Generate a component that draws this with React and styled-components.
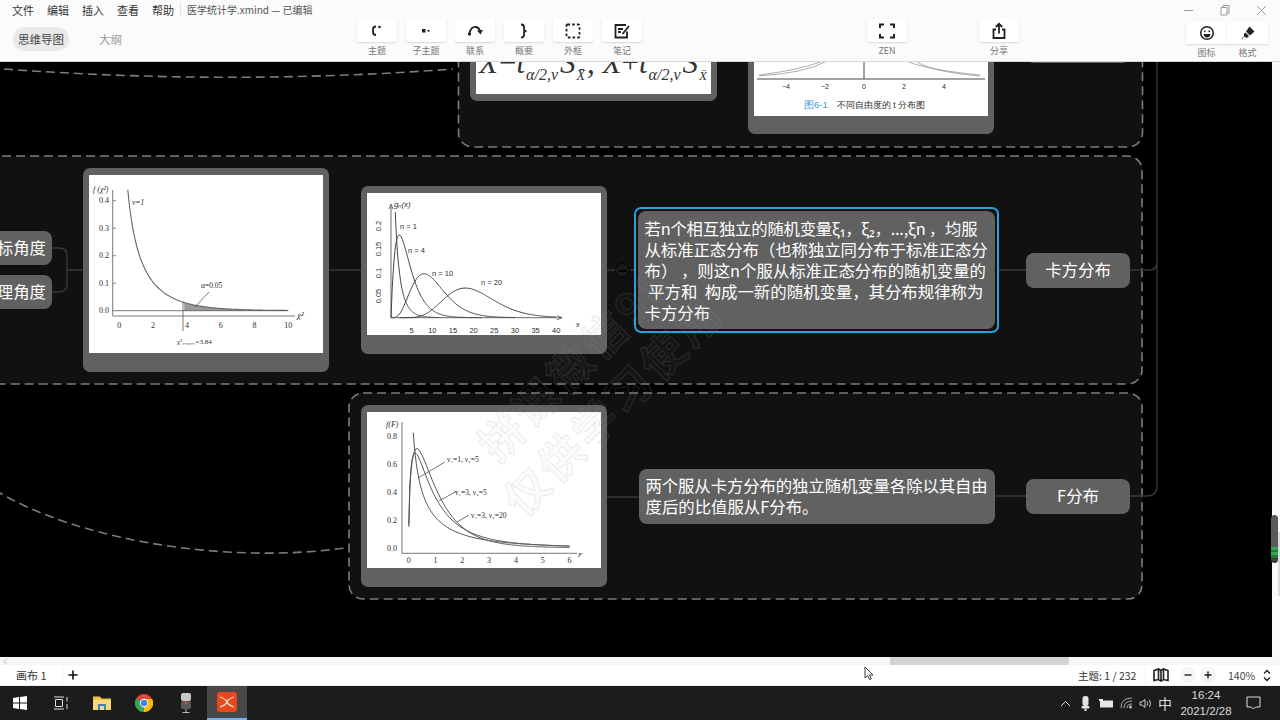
import React from "react";
import styled, { createGlobalStyle } from "styled-components";

const CJK = `"Noto Sans CJK SC", "Noto Sans", sans-serif`;

const GlobalStyle = createGlobalStyle`
  html, body {
    margin: 0;
    padding: 0;
    background: #000;
    overflow: hidden;
  }
  * {
    box-sizing: border-box;
  }
`;

const Screen = styled.div`
  width: 1280px;
  height: 720px;
  display: flex;
  flex-direction: column;
  font-family: ${CJK};
  overflow: hidden;
`;

/* window header */
const Header = styled.header`
  height: 62px;
  flex: none;
  background: #fbfbfb;
  border-bottom: 1px solid #d8d8d8;
`;

const MenuRow = styled.div`
  height: 19px;
  display: flex;
  align-items: center;
  padding: 0 12px;
  font-size: 11px;
  color: #333;
`;

const MenuItem = styled.span`
  width: 35px;
  flex: none;
`;

const DocTitle = styled.span`
  margin-left: -7px;
  padding-left: 6px;
  border-left: 1px solid #e2e2e2;
  font-size: 10px;
  line-height: 13px;
  color: #555;
`;

const WindowControls = styled.div`
  margin-left: auto;
  display: flex;
  gap: 24px;
  padding-right: 1px;
  color: #999;
`;

const ToolRow = styled.div`
  height: 42px;
  display: flex;
  align-items: flex-start;
`;

const Tabs = styled.div`
  width: 357px;
  flex: none;
  display: flex;
  align-items: center;
  padding: 8px 0 0 13px;
`;

const ActiveTab = styled.div`
  width: 56px;
  height: 24px;
  border-radius: 12px;
  background: #e9e9e9;
  color: #444;
  font-size: 11.5px;
  line-height: 24px;
  text-align: center;
`;

const Tab = styled.div`
  margin-left: 30px;
  color: #999;
  font-size: 11.5px;
`;

const ToolGroup = styled.div`
  display: flex;
  gap: ${(p) => p.$gap || 0}px;
  margin-left: ${(p) => p.$left || 0}px;
`;

const Tool = styled.div`
  width: ${(p) => p.$w || 40}px;
  display: flex;
  flex-direction: column;
  align-items: center;
`;

const ToolButton = styled.div`
  width: 100%;
  height: 23px;
  display: flex;
  align-items: center;
  justify-content: center;
  background: #fff;
  border-radius: 2px;
  box-shadow: 0 1px 2px rgba(0, 0, 0, 0.14);
  color: #222;
`;

const ToolLabel = styled.span`
  margin-top: 3px;
  font-size: 9px;
  line-height: 11px;
  color: #777;
`;

const FormatGroup = styled(ToolGroup)`
  margin-top: 3px;
  ${ToolButton} {
    height: 22px;
    border-radius: 0;
  }
`;

/* mind map */
const Body = styled.div`
  height: 595px;
  flex: none;
  display: flex;
`;

const Canvas = styled.main`
  position: relative;
  width: 1272px;
  height: 595px;
  background: #000;
  overflow: hidden;
`;

const Wires = styled.svg`
  position: absolute;
  inset: 0;
`;

const Topic = styled.div`
  position: absolute;
  left: ${(p) => p.$x}px;
  top: ${(p) => p.$y}px;
  width: ${(p) => p.$w}px;
  height: ${(p) => p.$h}px;
  display: flex;
  align-items: center;
  justify-content: ${(p) => p.$align || "center"};
  padding-right: ${(p) => p.$pad || 0}px;
  padding-bottom: 3px;
  border-radius: 8px;
  background: #616161;
  color: #fff;
  font-size: 16.4px;
  white-space: nowrap;
`;

const LongTopic = styled(Topic)`
  display: block;
  padding: ${(p) => p.$top}px 0 0 6.5px;
  font-size: 16.4px;
  line-height: 20.9px;
`;

const Selection = styled.div`
  position: absolute;
  left: 634px;
  top: 145px;
  width: 365px;
  height: 126px;
  border: 2px solid #2b9fe0;
  border-radius: 7px;
`;

const Line = styled.div`
  display: block;
  letter-spacing: ${(p) => p.$track || 0}px;
`;

const ImageCard = styled.div`
  position: absolute;
  left: ${(p) => p.$x}px;
  top: ${(p) => p.$y}px;
  width: ${(p) => p.$w}px;
  height: ${(p) => p.$h}px;
  padding: ${(p) => p.$inset}px 6px 0;
  border-radius: 7px;
  background: #616161;
`;

const Picture = styled.div`
  width: 100%;
  height: ${(p) => p.$h}px;
  background: #fff;
  overflow: hidden;
`;

const ChartSvg = styled.svg`
  display: block;
`;

const ChartText = styled.text`
  font-family: ${(p) => (p.$sans ? '"Liberation Sans", sans-serif' : '"Liberation Serif", serif')};
  font-size: ${(p) => p.$size || 8}px;
  font-style: ${(p) => (p.$italic ? "italic" : "normal")};
  fill: ${(p) => p.$fill || "#2c2c2c"};
`;

const Formula = styled.div`
  margin-top: 26px;
  display: flex;
  align-items: baseline;
  padding-left: 3px;
  height: 30px;
  font-family: "Liberation Serif", serif;
  font-size: 31px;
  line-height: 30px;
  color: #333;
  white-space: nowrap;
`;

const FormulaVar = styled.span`
  font-style: italic;
  margin-right: ${(p) => p.$gap || 0}px;
`;

const FormulaSub = styled.span`
  font-size: ${(p) => p.$size || 16}px;
  font-style: italic;
  margin-right: ${(p) => p.$gap || 0}px;
  position: relative;
  top: 7px;
`;

const Collapse = styled.div`
  position: absolute;
  left: 615px;
  top: 201px;
  width: 15px;
  height: 15px;
  display: flex;
  align-items: center;
  justify-content: center;
  border-radius: 50%;
  background: #1a1a1a;
  border: 1px solid #000;
  &::before {
    content: "";
    width: 8px;
    height: 2px;
    background: #000;
  }
`;

const Watermark = styled.div`
  position: absolute;
  left: ${(p) => p.$x}px;
  top: ${(p) => p.$y}px;
  transform: rotate(-45deg);
  transform-origin: left top;
  font-size: 44px;
  font-weight: 700;
  letter-spacing: 4px;
  white-space: nowrap;
  color: rgba(150, 150, 150, 0.05);
  -webkit-text-stroke: 1px rgba(150, 150, 150, 0.2);
  pointer-events: none;
`;

/* scrollbars */
const VScroll = styled.div`
  position: relative;
  width: 8px;
  height: 595px;
  background: #fafafa;
`;

const VTrack = styled.div`
  position: absolute;
  right: 0;
  top: 470px;
  width: 2px;
  height: 64px;
  background: #dcdcdc;
`;

const MiniMap = styled.div`
  position: absolute;
  left: -1px;
  top: 453px;
  width: 7px;
  height: 48px;
  border-radius: 4px;
  background: linear-gradient(#5a5a5a 0 66%, #2fa84f 66% 72%, #1f7a3a 72% 78%, #2fa84f 78% 84%, #1f7a3a 84% 90%, #3c3c3c 90%);
`;

const HScroll = styled.div`
  height: 8px;
  flex: none;
  display: flex;
  align-items: stretch;
  background: #f6f6f6;
`;

const HGap = styled.div`
  width: 890px;
  padding-left: 3px;
  display: flex;
  align-items: center;
  color: #bbb;
`;

const HThumb = styled.div`
  width: 179px;
  background: #d4d4d4;
`;

const StatusBar = styled.footer`
  height: 21px;
  flex: none;
  display: flex;
  align-items: center;
  padding-right: 2px;
  background: #fff;
  font-size: 11px;
  color: #333;
  border-bottom: 1px solid #f0f0f0;
`;

const SheetTab = styled.div`
  width: 63px;
  height: 100%;
  padding-left: 16px;
  display: flex;
  align-items: center;
  border-right: 1px solid #f2f2f2;
`;

const AddSheet = styled.div`
  width: 20px;
  display: flex;
  justify-content: center;
  color: #111;
`;

const Counter = styled.div`
  margin-left: auto;
  width: 68px;
  height: 100%;
  display: flex;
  align-items: center;
  border-right: 1px solid #f2f2f2;
  font-family: ${CJK};
  font-size: 10.5px;
`;

const StatusIcon = styled.div`
  width: ${(p) => p.$w}px;
  display: flex;
  justify-content: center;
  color: #222;
`;

const ZoomButton = styled.div`
  width: 16px;
  height: 16px;
  margin-right: 4px;
  display: flex;
  align-items: center;
  justify-content: center;
  border-radius: 50%;
  background: #f5f5f5;
  color: #222;
`;

const ZoomValue = styled.div`
  margin-left: 8px;
  width: 28px;
  font-size: 10.5px;
  color: #444;
`;

/* windows taskbar */
const Taskbar = styled.div`
  height: 34px;
  flex: none;
  display: flex;
  align-items: center;
  background: #1c1c1c;
  color: #e8e8e8;
`;

const TaskItem = styled.div`
  width: ${(p) => p.$w || 41}px;
  height: 100%;
  display: flex;
  align-items: center;
  justify-content: center;
  background: ${(p) => (p.$active ? "#484848" : "transparent")};
  border-bottom: ${(p) => (p.$active ? "2px solid #6fb1e8" : "none")};
`;

const Tray = styled.div`
  margin-left: auto;
  height: 100%;
  display: flex;
  align-items: center;
`;

const TrayItem = styled.div`
  width: ${(p) => p.$w || 20}px;
  display: flex;
  justify-content: center;
  font-size: ${(p) => p.$size || 12}px;
  color: #dcdcdc;
`;

const Clock = styled.div`
  width: 60px;
  margin-right: 8px;
  text-align: center;
  font-family: "Liberation Sans", sans-serif;
  font-size: 11.5px;
  line-height: 16px;
  color: #ddd;
`;

const Pointer = styled.svg`
  position: absolute;
  left: 864px;
  top: 666px;
`;

const plot = (fn, a, b, ox, oy, sx, sy, top = 0, n = 160) => {
  const pts = [];
  for (let i = 0; i <= n; i++) {
    const x = a + ((b - a) * i) / n;
    const py = oy - fn(x) * sy;
    if (py >= top) pts.push(`${(ox + x * sx).toFixed(1)} ${py.toFixed(1)}`);
  }
  return "M" + pts.join("L");
};

const chi = (k, gamma) => (x) =>
  (Math.pow(x, k / 2 - 1) * Math.exp(-x / 2)) / (Math.pow(2, k / 2) * gamma);

const fDist = (d1, d2, beta) => (x) =>
  Math.sqrt((Math.pow(d1 * x, d1) * Math.pow(d2, d2)) / Math.pow(d1 * x + d2, d1 + d2)) / (x * beta);

function ChiOneChart() {
  const ox = 30.3;
  const oy = 135.7;
  const sx = 16.9;
  const sy = 275;
  const pdf = chi(1, Math.sqrt(Math.PI));
  const tail = plot(pdf, 3.84, 9, ox, oy, sx, sy);
  return (
    <ChartSvg width="234" height="178">
      <path d={`${tail}L${ox + 9 * sx} ${oy}L${ox + 3.84 * sx} ${oy}Z`} fill="#9a9a9a" />
      <path d={plot(pdf, 0.5, 10, ox, oy, sx, sy)} fill="none" stroke="#666" strokeWidth="1.1" />
      <path d="M23.7 15V141H206M23.7 135.7H199M94 127V156M120 117L106 132" fill="none" stroke="#555" strokeWidth="0.8" />
      {[0.1, 0.2, 0.3, 0.4].map((v) => (
        <path key={v} d={`M24 ${oy - v * sy}h3`} stroke="#555" strokeWidth="0.7" />
      ))}
      {[0, 2, 4, 6, 8, 10].map((v) => (
        <ChartText key={v} x={ox + v * sx} y="153" textAnchor="middle">{v}</ChartText>
      ))}
      {["0.0", "0.1", "0.2", "0.3", "0.4"].map((v) => (
        <ChartText key={v} x="20" y={oy - Number(v) * sy + 2.5} textAnchor="end">{v}</ChartText>
      ))}
      <ChartText x="4" y="17" $italic>f (χ²)</ChartText>
      <ChartText x="43" y="30" $size={7.5} $italic>ν=1</ChartText>
      <ChartText x="112" y="113" $size={7.5}>α=0.05</ChartText>
      <ChartText x="208" y="143" $size={9} $italic>χ²</ChartText>
      <ChartText x="88" y="169" $size={7}>χ²₀.₀₅,₁=3.84</ChartText>
    </ChartSvg>
  );
}

function ChiFamilyChart() {
  const ox = 24;
  const oy = 124.7;
  const sx = 4.13;
  const sy = 450;
  const curves = [
    [chi(1, Math.sqrt(Math.PI)), 0.06, 12],
    [chi(4, 1), 0, 22],
    [chi(10, 24), 0, 30],
    [chi(20, 362880), 2, 40],
  ];
  return (
    <ChartSvg width="234" height="142">
      {curves.map(([fn, a, b], i) => (
        <path key={i} d={plot(fn, a, b, ox, oy, sx, sy, 19)} fill="none" stroke="#444" strokeWidth="1" />
      ))}
      <path d="M24 124.7V13M22 16L24 11L26 16M24 124.7H195M190 122.7L195 124.7L190 126.7" fill="none" stroke="#444" strokeWidth="0.8" />
      {[5, 10, 15, 20, 25, 30, 35, 40].map((v) => (
        <ChartText key={v} x={ox + v * sx} y="140" textAnchor="middle" $sans $size={7.5}>{v}</ChartText>
      ))}
      {[["0.2", 33], ["0.15", 56], ["0.1", 80], ["0.05", 103]].map(([t, y]) => (
        <ChartText key={t} x="14" y={y} textAnchor="middle" $sans $size={7.5} transform={`rotate(-90 14 ${y})`}>{t}</ChartText>
      ))}
      <ChartText x="27" y="14" $sans $size={8} $italic>gₙ(x)</ChartText>
      <ChartText x="33" y="36" $sans $size={7.5}>n = 1</ChartText>
      <ChartText x="41" y="60" $sans $size={7.5}>n = 4</ChartText>
      <ChartText x="65" y="83" $sans $size={7.5}>n = 10</ChartText>
      <ChartText x="114" y="92" $sans $size={7.5}>n = 20</ChartText>
      <ChartText x="209" y="134" $sans $size={7} $italic>x</ChartText>
    </ChartSvg>
  );
}

function FChart() {
  const ox = 41.7;
  const oy = 136;
  const sx = 26.8;
  const sy = 140;
  const curves = [
    [fDist(1, 5, 1.178), 0.062],
    [fDist(3, 5, 0.196), 0.005],
    [fDist(3, 20, 0.02702), 0.005],
  ];
  return (
    <ChartSvg width="234" height="156">
      {curves.map(([fn, a], i) => (
        <path key={i} d={plot(fn, a, 6, ox, oy, sx, sy, 10)} fill="none" stroke="#555" strokeWidth="1" />
      ))}
      <path d="M35 10V141.3H210M51 66L78 50M72 89L90 79M90 110L102 103" fill="none" stroke="#555" strokeWidth="0.8" />
      {[0, 1, 2, 3, 4, 5, 6].map((v) => (
        <ChartText key={v} x={ox + v * sx} y="151" textAnchor="middle">{v}</ChartText>
      ))}
      {["0.0", "0.2", "0.4", "0.6", "0.8"].map((v) => (
        <ChartText key={v} x="30" y={oy - Number(v) * sy + 2.5} textAnchor="end">{v}</ChartText>
      ))}
      <ChartText x="19" y="15" $italic>f(F)</ChartText>
      <ChartText x="80" y="50" $size={7.5}>ν₁=1,  ν₂=5</ChartText>
      <ChartText x="88" y="83" $size={7.5}>ν₁=3,  ν₂=5</ChartText>
      <ChartText x="104" y="106" $size={7.5}>ν₁=3,  ν₂=20</ChartText>
      <ChartText x="211" y="145" $size={7} $italic>F</ChartText>
    </ChartSvg>
  );
}

function TChart() {
  return (
    <ChartSvg width="234" height="54">
      <path d="M3 17H231M110 0V17" fill="none" stroke="#333" strokeWidth="0.9" />
      <path d="M5 14Q50 11 71 0M5 13Q45 8 66 0M163 0Q180 10 226 14M155 0Q175 8 226 13" fill="none" stroke="#888" strokeWidth="0.7" />
      {[["−4", 32], ["−2", 71], ["0", 110], ["2", 150], ["4", 190]].map(([t, x]) => (
        <ChartText key={t} x={x} y="27" textAnchor="middle" $sans $size={7}>{t}</ChartText>
      ))}
      <ChartText x="50" y="46" $sans $size={9.5} $fill="#3d9ad6">图6-1</ChartText>
      <ChartText x="83" y="46" $sans $size={8.5}>不同自由度的 t 分布图</ChartText>
    </ChartSvg>
  );
}

const dash = { stroke: "#7c7c7c", strokeWidth: 1.6, strokeDasharray: "9 5" };

function ConnectorLayer() {
  const line = { fill: "none", stroke: "#383838", strokeWidth: 1.4 };
  return (
    <Wires width="1272" height="595">
      <rect x="458.5" y="-40" width="684" height="125" rx="14" fill="#111" {...dash} />
      <rect x="-40" y="94" width="1182" height="228" rx="14" fill="#111" {...dash} />
      <rect x="349" y="331" width="793" height="206" rx="14" fill="#111" {...dash} />
      <path d="M-10 6Q226 24 453 7" fill="none" {...dash} />
      <path d="M-5 428C80 480 230 502 345 486" fill="none" {...dash} />
      <path d="M52 186H59Q67 186 67 194V222Q67 230 59 230H52M67 208H83M329 208H361M607 208H634M998 208H1026M1130 208H1149Q1157 208 1157 200V0M1157 200V423Q1157 434 1147 434H1130M607 435H639M995 434H1026" {...line} />
    </Wires>
  );
}

const toolIcon = { width: 18, height: 18, viewBox: "0 0 18 18", fill: "none", stroke: "currentColor", strokeWidth: 1.8 };

function App() {
  return (
    <Screen>
      <GlobalStyle />
      <Header>
        <MenuRow>
          <MenuItem>文件</MenuItem>
          <MenuItem>编辑</MenuItem>
          <MenuItem>插入</MenuItem>
          <MenuItem>查看</MenuItem>
          <MenuItem>帮助</MenuItem>
          <DocTitle>医学统计学.xmind — 已编辑</DocTitle>
          <WindowControls>
            <svg width="12" height="12" viewBox="0 0 12 12" stroke="currentColor" fill="none"><path d="M1 6.5H10" /></svg>
            <svg width="12" height="12" viewBox="0 0 12 12" stroke="currentColor" fill="none"><path d="M2 3.5H8V11H2ZM4 3.5V1.5H10V9H8" /></svg>
            <svg width="12" height="12" viewBox="0 0 12 12" stroke="currentColor" fill="none"><path d="M2 2L11 11M11 2L2 11" /></svg>
          </WindowControls>
        </MenuRow>
        <ToolRow>
          <Tabs>
            <ActiveTab>思维导图</ActiveTab>
            <Tab>大纲</Tab>
          </Tabs>
          <ToolGroup $gap={9}>
            <Tool>
              <ToolButton>
                <svg {...toolIcon}><path d="M8 4.5Q5 4.5 5 7.5V10Q5 13 8 13" /><circle cx="11.5" cy="5" r="1.3" fill="currentColor" stroke="none" /></svg>
              </ToolButton>
              <ToolLabel>主题</ToolLabel>
            </Tool>
            <Tool>
              <ToolButton>
                <svg {...toolIcon}><rect x="5" y="7" width="3.5" height="3.5" fill="currentColor" stroke="none" /><circle cx="11.5" cy="8.8" r="1.1" fill="currentColor" stroke="none" /></svg>
              </ToolButton>
              <ToolLabel>子主题</ToolLabel>
            </Tool>
            <Tool>
              <ToolButton>
                <svg {...toolIcon}><path d="M3.5 11Q5 4.5 10 5Q13 5.5 14 9" /><circle cx="3.5" cy="12" r="1.7" fill="currentColor" stroke="none" /><path d="M11 8.5L14.5 12.5L17 8Z" fill="currentColor" stroke="none" /></svg>
              </ToolButton>
              <ToolLabel>联系</ToolLabel>
            </Tool>
            <Tool>
              <ToolButton>
                <svg {...toolIcon}><path d="M6 2.5Q9 2.5 9 5V7.5Q9 9 11.5 9Q9 9 9 10.5V13Q9 15.5 6 15.5" /></svg>
              </ToolButton>
              <ToolLabel>概要</ToolLabel>
            </Tool>
            <Tool>
              <ToolButton>
                <svg {...toolIcon}><rect x="2.5" y="2.5" width="13" height="13" rx="1" strokeDasharray="2.6 2.1" /></svg>
              </ToolButton>
              <ToolLabel>外框</ToolLabel>
            </Tool>
            <Tool>
              <ToolButton>
                <svg {...toolIcon}><path d="M13 3H2.5V15.5H14V9.5M5 7H10M5 10H8M9.5 12L16 4" /></svg>
              </ToolButton>
              <ToolLabel>笔记</ToolLabel>
            </Tool>
          </ToolGroup>
          <ToolGroup $left={225}>
            <Tool>
              <ToolButton>
                <svg {...toolIcon} strokeWidth="2"><path d="M2 6V2.5H6M12 2.5H16V6M2 12V15.5H6M12 15.5H16V12" /></svg>
              </ToolButton>
              <ToolLabel>ZEN</ToolLabel>
            </Tool>
          </ToolGroup>
          <ToolGroup $left={72}>
            <Tool>
              <ToolButton>
                <svg {...toolIcon}><path d="M6 7.5H3.5V16H14.5V7.5H12M9 11.5V2M5.8 5L9 1.8L12.2 5" /></svg>
              </ToolButton>
              <ToolLabel>分享</ToolLabel>
            </Tool>
          </ToolGroup>
          <FormatGroup $left={167}>
            <Tool $w={41}>
              <ToolButton>
                <svg {...toolIcon} strokeWidth="1.5"><circle cx="9" cy="9" r="6.3" /><circle cx="6.8" cy="7.3" r="0.9" fill="currentColor" stroke="none" /><circle cx="11.2" cy="7.3" r="0.9" fill="currentColor" stroke="none" /><path d="M5.5 10H12.5Q12 13.5 9 13.5Q6 13.5 5.5 10Z" fill="currentColor" stroke="none" /></svg>
              </ToolButton>
              <ToolLabel>图标</ToolLabel>
            </Tool>
            <Tool $w={41}>
              <ToolButton>
                <svg {...toolIcon} stroke="none" fill="currentColor"><path d="M10.5 2.5L15.5 7.5L11 11.5L7 7.5ZM6.5 8.5L10 12L8 14L5 12.5L3 15.5L2.5 15L5 12L5 10Z" /></svg>
              </ToolButton>
              <ToolLabel>格式</ToolLabel>
            </Tool>
          </FormatGroup>
        </ToolRow>
      </Header>

      <Body>
        <Canvas>
          <ConnectorLayer />

          <ImageCard $x={470} $y={-40} $w={247} $h={79} $inset={0}>
            <Picture $h={72}>
              <Formula>
                <FormulaVar $gap={1}>X̄</FormulaVar>−
                <FormulaVar $gap={1}>t</FormulaVar>
                <FormulaSub $gap={2}>α/2,ν</FormulaSub>
                <FormulaVar $gap={1}>S</FormulaVar>
                <FormulaSub $size={14} $gap={2}>X̄</FormulaSub>
                <span>,&nbsp;</span>
                <FormulaVar>X̄</FormulaVar>+
                <FormulaVar $gap={1}>t</FormulaVar>
                <FormulaSub $gap={2}>α/2,ν</FormulaSub>
                <FormulaVar $gap={1}>S</FormulaVar>
                <FormulaSub $size={13}>X̄</FormulaSub>
              </Formula>
            </Picture>
          </ImageCard>
          <ImageCard $x={748} $y={-10} $w={246} $h={82} $inset={10}>
            <Picture $h={54}>
              <TChart />
            </Picture>
          </ImageCard>
          <Topic $x={1026} $y={-34} $w={104} $h={35} />

          <Topic $x={-70} $y={169} $w={122} $h={34} $align="flex-end" $pad={6}>标角度</Topic>
          <Topic $x={-70} $y={213} $w={122} $h={34} $align="flex-end" $pad={6}>理角度</Topic>

          <ImageCard $x={83} $y={106} $w={246} $h={204} $inset={7}>
            <Picture $h={178}>
              <ChiOneChart />
            </Picture>
          </ImageCard>
          <ImageCard $x={361} $y={124} $w={246} $h={168} $inset={7}>
            <Picture $h={142}>
              <ChiFamilyChart />
            </Picture>
          </ImageCard>

          <Collapse />
          <Selection />
          <LongTopic $x={638} $y={149} $w={357} $h={118} $top={7}>
            <Line $track={-0.23}>若n个相互独立的随机变量ξ₁，ξ₂，...,ξn ，均服</Line>
            <Line $track={-0.05}>从标准正态分布（也称独立同分布于标准正态分</Line>
            <Line>布）&nbsp;，则这n个服从标准正态分布的随机变量的</Line>
            <Line>&nbsp;平方和&nbsp;&nbsp;构成一新的随机变量，其分布规律称为</Line>
            <Line>卡方分布</Line>
          </LongTopic>
          <Topic $x={1026} $y={191} $w={104} $h={35}>卡方分布</Topic>

          <ImageCard $x={361} $y={343} $w={246} $h={182} $inset={7}>
            <Picture $h={156}>
              <FChart />
            </Picture>
          </ImageCard>
          <LongTopic $x={639} $y={407} $w={356} $h={55} $top={6}>
            <Line $track={-0.1}>两个服从卡方分布的独立随机变量各除以其自由</Line>
            <Line>度后的比值服从F分布。</Line>
          </LongTopic>
          <Topic $x={1026} $y={417} $w={104} $h={35}>F分布</Topic>

          <Watermark $x={462} $y={366}>拼课微信98</Watermark>
          <Watermark $x={487} $y={421}>仅供学习使用</Watermark>
        </Canvas>
        <VScroll>
          <VTrack />
          <MiniMap />
        </VScroll>
      </Body>

      <HScroll>
        <HGap>
          <svg width="5" height="7" viewBox="0 0 5 7" fill="none" stroke="currentColor"><path d="M4 0.5L1 3.5L4 6.5" /></svg>
        </HGap>
        <HThumb />
      </HScroll>

      <StatusBar>
        <SheetTab>画布 1</SheetTab>
        <AddSheet>
          <svg width="10" height="10" viewBox="0 0 10 10" stroke="currentColor" strokeWidth="1.6"><path d="M5 0.5V9.5M0.5 5H9.5" /></svg>
        </AddSheet>
        <Counter>主题: 1 / 232</Counter>
        <StatusIcon $w={30}>
          <svg width="16" height="14" viewBox="0 0 16 14" fill="none" stroke="currentColor" strokeWidth="1.6"><path d="M1 2.5L5.5 1L8 2.5L10.5 1L15 2.5V12.5L10.5 11.5L8 13L5.5 11.5L1 12.5ZM5.5 1V11.5M10.5 1V11.5M8 2.5V13" /></svg>
        </StatusIcon>
        <StatusIcon $w={4} />
        <ZoomButton>
          <svg width="8" height="8" viewBox="0 0 8 8" stroke="currentColor" strokeWidth="1.4"><path d="M0.5 4H7.5" /></svg>
        </ZoomButton>
        <ZoomButton>
          <svg width="8" height="8" viewBox="0 0 8 8" stroke="currentColor" strokeWidth="1.4"><path d="M0.5 4H7.5M4 0.5V7.5" /></svg>
        </ZoomButton>
        <ZoomValue>140%</ZoomValue>
        <StatusIcon $w={22}>
          <svg width="8" height="13" viewBox="0 0 8 13" fill="none" stroke="currentColor" strokeWidth="1.4"><path d="M1 4.5L4 1.5L7 4.5M1 8.5L4 11.5L7 8.5" /></svg>
        </StatusIcon>
      </StatusBar>

      <Taskbar>
        <TaskItem $w={40}>
          <svg width="14" height="14" viewBox="0 0 14 14" fill="#fff"><path d="M0 2L6 1.1V6.6H0ZM7 1L14 0V6.6H7ZM0 7.4H6V12.9L0 12ZM7 7.4H14V14L7 13Z" /></svg>
        </TaskItem>
        <TaskItem $w={41}>
          <svg width="16" height="14" viewBox="0 0 16 14" fill="none" stroke="#ddd"><path d="M1 1H11M1 13H11M2.5 3.5H9.5V10.5H2.5ZM14 1V5.5M14 8V13" /></svg>
        </TaskItem>
        <TaskItem $w={42}>
          <svg width="18" height="16" viewBox="0 0 18 16"><path d="M0 1.5H7L8.5 3.5H18V15H0Z" fill="#f0c14b" /><path d="M0 5H18V15H0Z" fill="#f8d77a" /><rect x="5" y="9" width="8" height="6" fill="#3a86b7" /><rect x="7" y="11" width="4" height="4" fill="#f8d77a" /></svg>
        </TaskItem>
        <TaskItem $w={42}>
          <svg width="18" height="18" viewBox="0 0 18 18">
            <circle cx="9" cy="9" r="9" fill="#e8453c" />
            <path d="M9 9L1.2 4.5A9 9 0 0 0 9 18Z" fill="#34a853" />
            <path d="M9 5H17.2A9 9 0 0 1 9 18Z" fill="#fbbc05" />
            <circle cx="9" cy="9" r="4.2" fill="#fff" />
            <circle cx="9" cy="9" r="3.3" fill="#4285f4" />
          </svg>
        </TaskItem>
        <TaskItem $w={42}>
          <svg width="12" height="20" viewBox="0 0 12 20"><rect x="1" y="0" width="10" height="8" rx="2" fill="#c8c8c8" /><rect x="1" y="8" width="10" height="8" rx="2" fill="#5a5a5a" /><circle cx="6" cy="10" r="1.4" fill="#c0533a" /><path d="M6 16V19M2.5 19.5H9.5" stroke="#bbb" /></svg>
        </TaskItem>
        <TaskItem $w={40} $active>
          <svg width="20" height="20" viewBox="0 0 20 20"><rect width="20" height="20" rx="3" fill="#e8481c" /><path d="M3 5Q9 7 10 10Q11 7 17 5M3 15Q9 13 10 10Q11 13 17 15" fill="none" stroke="#ffe3d6" strokeWidth="1.3" /></svg>
        </TaskItem>
        <Tray>
          <TrayItem $w={20}>
            <svg width="11" height="7" viewBox="0 0 11 7" fill="none" stroke="currentColor"><path d="M1 6L5.5 1.5L10 6" /></svg>
          </TrayItem>
          <TrayItem $w={20}>
            <svg width="9" height="15" viewBox="0 0 9 15" fill="#e5e5e5"><rect x="1.5" y="0" width="6" height="10" rx="2.5" /><rect x="0.5" y="10" width="8" height="2.5" rx="1" /><rect x="3.5" y="12.5" width="2" height="2.5" /></svg>
          </TrayItem>
          <TrayItem $w={21}>
            <svg width="14" height="9" viewBox="0 0 14 9" fill="#e5e5e5"><rect x="1" y="1.5" width="13" height="7" /><rect x="0" y="0" width="4" height="2" /></svg>
          </TrayItem>
          <TrayItem $w={20}>
            <svg width="13" height="12" viewBox="0 0 13 12" fill="none" stroke="#aaa"><path d="M1 11Q1 1 12 1M4 11Q4 4 12 4M7 11Q7 7 12 7" /><circle cx="10.5" cy="10" r="1.2" fill="#aaa" /></svg>
          </TrayItem>
          <TrayItem $w={18}>
            <svg width="13" height="11" viewBox="0 0 13 11" fill="none" stroke="#ccc"><path d="M1 4H3L6 1.5V9.5L3 7H1ZM8 3.5Q9.5 5.5 8 7.5M10.5 2Q12.5 5.5 10.5 9" /></svg>
          </TrayItem>
          <TrayItem $w={22} $size={14}>中</TrayItem>
          <Clock>
            16:24
            <br />
            2021/2/28
          </Clock>
          <TrayItem $w={19}>
            <svg width="15" height="14" viewBox="0 0 15 14" fill="none" stroke="#ddd"><path d="M1 1H14V11H9.5L7.5 13L5.5 11H1Z" /></svg>
          </TrayItem>
          <TrayItem $w={17} />
        </Tray>
      </Taskbar>

      <Pointer width="10" height="15" viewBox="0 0 10 15">
        <path d="M1 1V12L3.6 9.6L5.6 13.6L7.3 12.8L5.4 9H9Z" fill="#fff" stroke="#222" strokeWidth="0.9" />
      </Pointer>
    </Screen>
  );
}

export default App;
